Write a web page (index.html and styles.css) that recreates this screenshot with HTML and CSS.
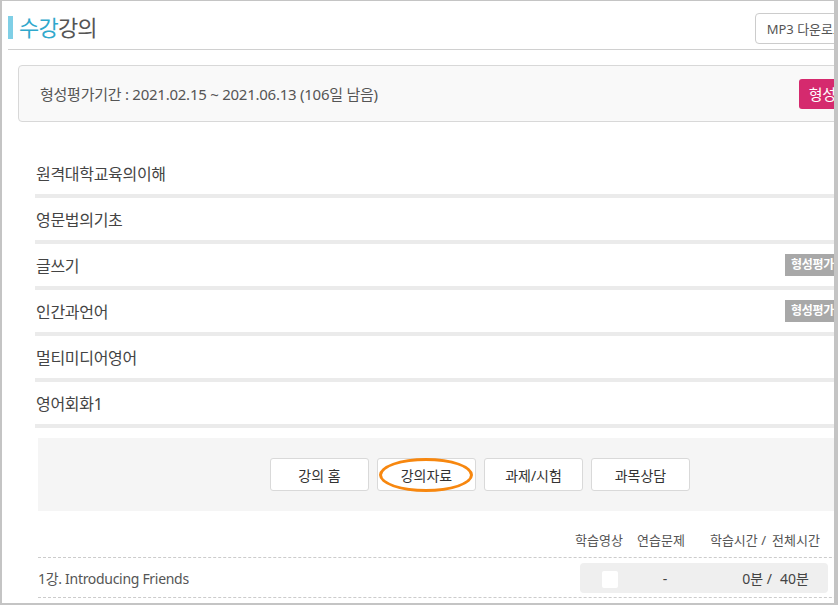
FILE: index.html
```html
<!DOCTYPE html>
<html lang="ko">
  <head>
    <meta charset="UTF-8" />
    <meta name="viewport" content="width=device-width, initial-scale=1.0" />
    <title>수강강의</title>
    <link rel="stylesheet" href="styles.css">
  </head>
  <body>
    <div class="frame">
      <div class="page">
        <div class="head">
          <h2 class="title"><span class="accent">수강</span>강의</h2>
          <button class="mp3-btn">MP3 다운로드</button>
        </div>

        <div class="summary">
          <span>형성평가기간 : 2021.02.15 ~ 2021.06.13 (106일 남음)</span>
          <a class="eval-btn">형성평가</a>
        </div>

        <ul class="courses">
          <li>원격대학교육의이해</li>
          <li>영문법의기초</li>
          <li>글쓰기 <span class="badge">형성평가</span></li>
          <li>인간과언어 <span class="badge">형성평가</span></li>
          <li>멀티미디어영어</li>
          <li>영어회화1</li>
        </ul>

        <div class="tabs">
          <button>강의 홈</button>
          <button class="active">강의자료<span class="mark"></span></button>
          <button>과제/시험</button>
          <button>과목상담</button>
        </div>

        <div class="lectures">
          <div class="lec-head">
            <span class="c1">학습영상</span>
            <span class="c2">연습문제</span>
            <span class="c3">학습시간 /</span>
            <span class="c4">전체시간</span>
          </div>
          <div class="lec-row">
            <span class="lec-title">1강. Introducing Friends</span>
            <div class="stats">
              <span class="c1"><i class="check"></i></span>
              <span class="c2">-</span>
              <span class="c3">0분 /</span>
              <span class="c4">40분</span>
            </div>
          </div>
        </div>
      </div>
    </div>
  </body>
</html>
```

FILE: styles.css
```css
* {
  box-sizing: border-box;
}

body {
  margin: 0;
  font-family: "Noto Sans", "Noto Sans CJK KR", sans-serif;
  color: #555;
  background: #fff;
}

.frame {
  width: 838px;
  height: 605px;
  overflow: hidden;
  border-top: 1px solid #c4c4c4;
  border-left: 2px solid #c4c4c4;
  border-right: 4px solid #c4c4c4;
  border-bottom: 2px solid #c4c4c4;
}

.page {
  width: 920px;
}

.head {
  display: flex;
  justify-content: space-between;
  align-items: center;
  margin-left: 6px;
  padding: 12px 65px 5px 0;
  border-bottom: 1px solid #d0d0d0;
}

.title {
  margin: 0 0 2px;
  padding-left: 6px;
  border-left: 5px solid #7fcfe6;
  font-size: 22px;
  font-weight: 400;
  line-height: 23px;
  color: #555;
  letter-spacing: -0.8px;
}

.accent {
  color: #2fa8cc;
}

.mp3-btn {
  height: 31px;
  padding: 0 11px;
  background: #fff;
  border: 1px solid #ccc;
  border-radius: 4px;
  font-family: inherit;
  font-size: 13px;
  color: #555;
}

.summary {
  display: flex;
  justify-content: space-between;
  align-items: center;
  height: 57px;
  margin: 15px 30px 0 16px;
  padding: 0 18px 0 21px;
  background: #f9f9f9;
  border: 1px solid #d8d8d8;
  border-radius: 4px;
  font-size: 15px;
  letter-spacing: -0.25px;
}

.eval-btn {
  display: inline-block;
  padding: 4px 10px;
  background: #d52a6e;
  color: #fff;
  border-radius: 3px;
  font-size: 15px;
  line-height: 22px;
}

.courses {
  list-style: none;
  margin: 30px 0 0 33px;
  padding: 0;
}

.courses li {
  display: flex;
  justify-content: space-between;
  align-items: center;
  height: 46px;
  padding: 0 82px 0 1px;
  border-bottom: 4px solid #ebebeb;
  font-size: 16px;
  color: #444;
  letter-spacing: -0.3px;
}

.badge {
  padding: 0 6px;
  background: #a8a8a8;
  color: #fff;
  font-size: 12px;
  font-weight: 700;
  line-height: 22px;
  letter-spacing: -0.3px;
}

.tabs {
  display: flex;
  justify-content: center;
  gap: 8px;
  margin: 10px 0 0 36px;
  padding: 20px 0;
  background: #f5f5f5;
}

.tabs button {
  position: relative;
  width: 99px;
  height: 33px;
  background: #fff;
  border: 1px solid #d9d9d9;
  border-radius: 3px;
  font-family: inherit;
  font-size: 14px;
  color: #333;
}

.mark {
  position: absolute;
  left: 1px;
  right: 2px;
  top: -1px;
  bottom: -2px;
  border: 3px solid #f7870f;
  border-radius: 50%;
}

.lectures {
  margin: 21px 0 0 36px;
  font-size: 13px;
}

.lec-head {
  display: grid;
  grid-template-columns: 64px 60px 75px 60px;
  justify-content: end;
  padding: 0 96px 8px 0;
  border-bottom: 1px dashed #ccc;
  line-height: 17px;
}

.lec-head .c1,
.lec-head .c2 {
  text-align: center;
}

.lec-head .c3 {
  text-align: right;
}

.lec-head .c4 {
  padding-left: 6px;
}

.lec-row {
  display: flex;
  align-items: center;
  justify-content: space-between;
  padding: 5px 94px 4px 0;
  border-bottom: 1px dashed #ccc;
}

.lec-title {
  font-size: 14px;
  color: #555;
  letter-spacing: -0.3px;
}

.stats {
  display: grid;
  grid-template-columns: 60px 50px 82px 56px;
  align-items: center;
  height: 30px;
  background: #efefef;
  border-radius: 4px;
  font-size: 14px;
  color: #444;
}

.stats .c1,
.stats .c2 {
  text-align: center;
}

.stats .c3 {
  text-align: right;
}

.stats .c4 {
  padding-left: 8px;
}

.check {
  display: inline-block;
  width: 16px;
  height: 17px;
  vertical-align: middle;
  background: #fff;
  border-radius: 2px;
}
```
